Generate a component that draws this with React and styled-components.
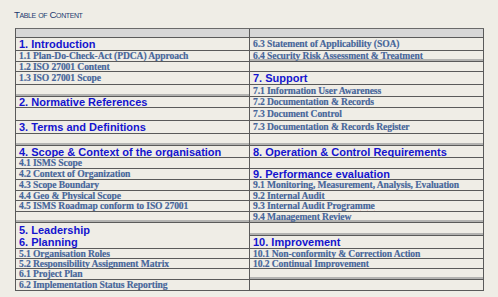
import React from "react";
import styled, { createGlobalStyle } from "styled-components";

const Global = createGlobalStyle`
  html, body { margin: 0; padding: 0; background: #efede6; }
  body { width: 498px; height: 297px; overflow: hidden; }
`;

const Page = styled.div`
  padding: 0 0 0 15px;
  display: flex;
  flex-direction: column;
`;

const Title = styled.div`
  height: 28px;
  box-sizing: border-box;
  padding: 9px 0 0 0;
  margin-left: -1px;
  font-family: "Liberation Sans", Arial, sans-serif;
  font-variant: small-caps;
  font-size: 9.8px;
  letter-spacing: -0.4px;
  color: #223a70;
  line-height: 12px;
`;

const ROWS = [9, 13, 11, 10, 13, 12, 11, 13, 13, 12, 12, 11, 11, 11, 10, 11, 11, 13, 13, 10, 10, 11, 11];

const Grid = styled.div`
  width: 469px;
  box-sizing: border-box;
  display: grid;
  grid-template-columns: 234px 234px;
  grid-template-rows: ${ROWS.map((r) => r + "px").join(" ")};
  border-top: 1px solid #6a6a6a;
  border-left: 1px solid #5a5a5a;
`;

const Cell = styled.div`
  box-sizing: border-box;
  border-right: 1px solid #5a5a5a;
  border-bottom: ${(p) => (p.$open ? "none" : "1px solid #5a5a5a")};
  background: ${(p) => (p.$header ? "#d7d7d7" : "transparent")};
  box-shadow: ${(p) => (p.$shade ? "inset 0 -2px 0 #b3b3b1" : "none")};
  padding-left: 3px;
  display: flex;
  align-items: center;
  overflow: hidden;
  white-space: nowrap;
`;

const Heading = styled.span`
  font-family: "Liberation Sans", Arial, sans-serif;
  font-weight: bold;
  font-size: 11px;
  line-height: 11px;
  color: #1414cf;
  padding-top: 1px;
`;

const Item = styled.span`
  font-family: "Liberation Serif", "Times New Roman", serif;
  font-weight: bold;
  font-size: 9.6px;
  letter-spacing: -0.1px;
  line-height: 10px;
  color: #46659a;
  -webkit-text-stroke: 0.15px #46659a;
`;

const Misspelt = styled.span`
  text-decoration: underline wavy #e06060;
  text-decoration-thickness: 1px;
  text-underline-offset: 1px;
`;

const left = [
  { h: true },
  { t: "1. Introduction", big: true },
  { t: "1.1 Plan-Do-Check-Act (PDCA) Approach" },
  { t: "1.2 ISO 27001 Content" },
  { t: "1.3 ISO 27001 Scope" },
  { t: "", shade: true },
  { t: "2. Normative References", big: true },
  { t: "" },
  { t: "3. Terms and Definitions", big: true },
  { t: "", shade: true },
  { t: "4. Scope & Context of the organisation", big: true },
  { t: "4.1 ISMS Scope" },
  { t: "4.2 Context of Organization" },
  { t: "4.3 Scope Boundary" },
  { t: "4.4 Geo & Physical Scope" },
  { t: "4.5 ISMS Roadmap conform to ISO 27001" },
  { t: "", shade: true },
  { t: "5. Leadership", big: true, open: true },
  { t: "6. Planning", big: true },
  { t: <>5.1 <Misspelt>Organisation</Misspelt> Roles</> },
  { t: "5.2 Responsibility Assignment Matrix" },
  { t: "6.1 Project Plan" },
  { t: "6.2 Implementation Status Reporting" },
];

const right = [
  { h: true },
  { t: "6.3 Statement of Applicability (SOA)" },
  { t: "6.4 Security Risk Assessment & Treatment", shade: true },
  { t: "" },
  { t: "7. Support", big: true },
  { t: "7.1 Information User Awareness" },
  { t: "7.2 Documentation & Records" },
  { t: "7.3 Document Control" },
  { t: "7.3 Documentation & Records Register" },
  { t: "", shade: true },
  { t: "8. Operation & Control Requirements", big: true },
  { t: "" },
  { t: "9. Performance evaluation", big: true },
  { t: "9.1 Monitoring, Measurement, Analysis, Evaluation" },
  { t: "9.2 Internal Audit" },
  { t: <>9.3 Internal Audit <Misspelt>Programme</Misspelt></> },
  { t: "9.4 Management Review", shade: true },
  { t: "", shade: true },
  { t: "10. Improvement", big: true },
  { t: "10.1 Non-conformity & Correction Action" },
  { t: "10.2 Continual Improvement" },
  { t: "", shade: true },
  { t: "" },
];

function renderCell(c, key, col) {
  return (
    <Cell
      key={key}
      $header={c.h}
      $shade={c.shade}
      $open={c.open}
      style={{ gridColumn: col }}
    >
      {c.h ? null : c.big ? <Heading>{c.t}</Heading> : <Item>{c.t}</Item>}
    </Cell>
  );
}

export default function App() {
  const cells = [];
  for (let i = 0; i < ROWS.length; i++) {
    cells.push(renderCell(left[i], "l" + i, 1));
    cells.push(renderCell(right[i], "r" + i, 2));
  }
  return (
    <>
      <Global />
      <Page>
        <Title>Table of Content</Title>
        <Grid>{cells}</Grid>
      </Page>
    </>
  );
}
